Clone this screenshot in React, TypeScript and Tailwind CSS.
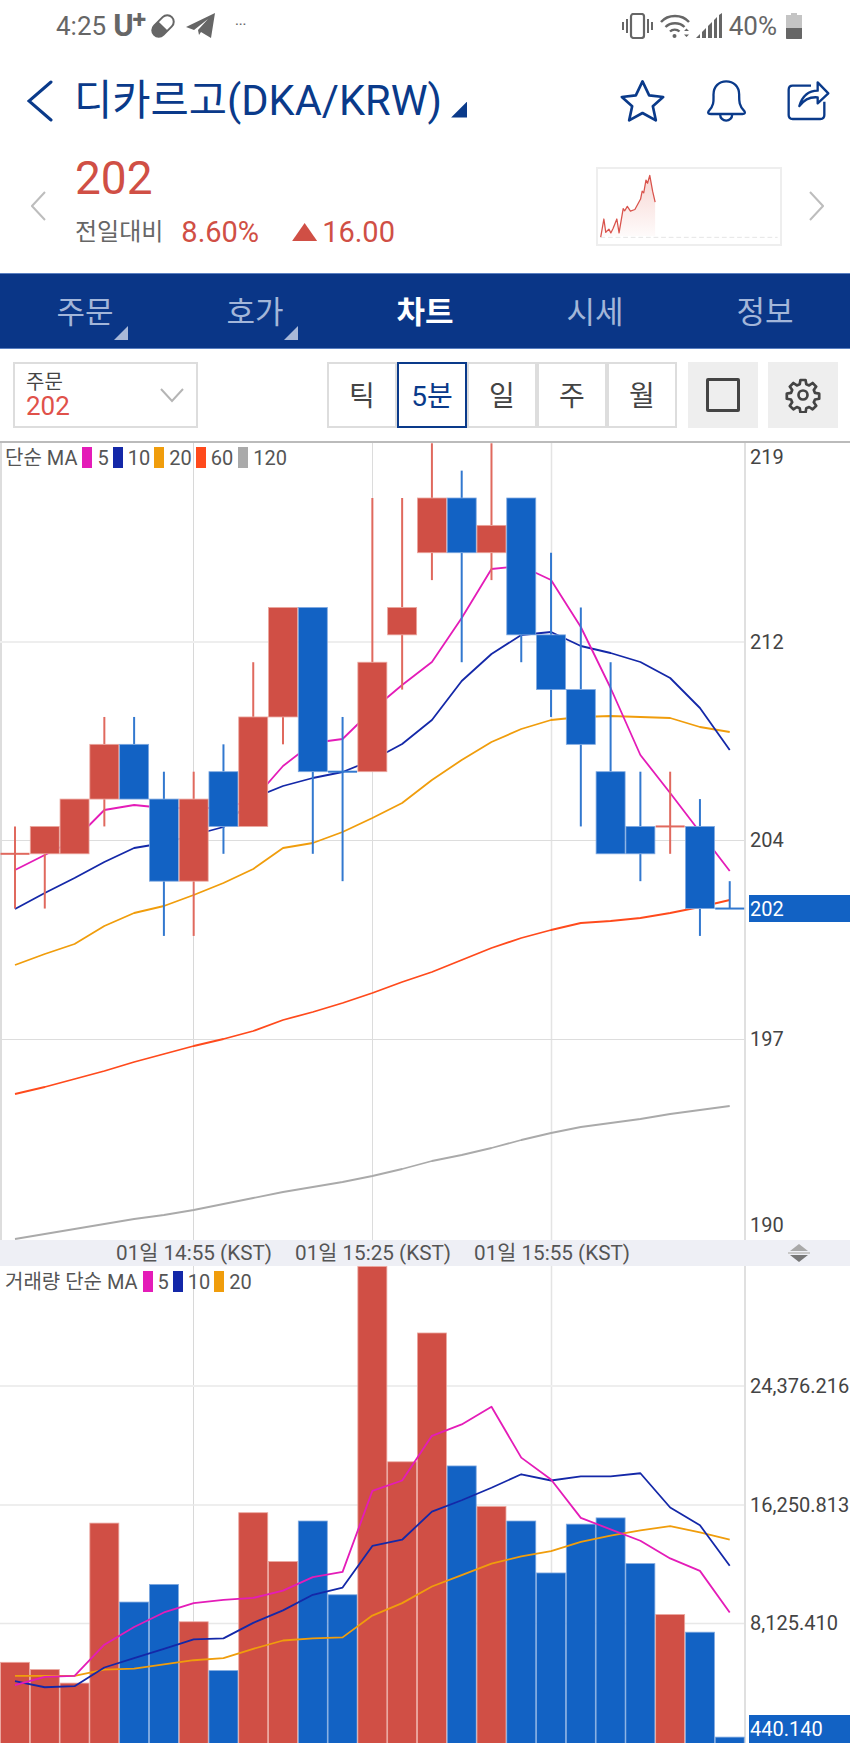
import React from 'react';

const RED = '#d04f45';
const BLUE = '#1262c4';
const NAVY = '#0a3a8a';

const X = (i: number) => 15 + 29.78 * i;
const L = (n: number) => 498 + 27.37 * n;
const pts = (ys: number[]) => ys.map((y, i) => `${X(i)},${y}`).join(' ');
// volume readings were taken off a squeezed crop
const V = (y: number) => 1200 + (y - 1200) * 1.0389;

// color, body top, body bottom, wick top, wick bottom (in price ticks)
const candles: [string, number, number, number | null, number | null][] = [
  ['r', 13, 13, 12, 15],
  ['r', 12, 13, null, 15],
  ['r', 11, 13, null, null],
  ['r', 9, 11, 8, 12],
  ['b', 9, 11, 8, null],
  ['b', 11, 14, 10, 16],
  ['r', 11, 14, 10, 16],
  ['b', 10, 12, 9, 13],
  ['r', 8, 12, 6, null],
  ['r', 4, 8, null, 9],
  ['b', 4, 10, null, 13],
  ['b', 10, 10, 8, 14],
  ['r', 6, 10, 0, null],
  ['r', 4, 5, 0, 7],
  ['r', 0, 2, -2, 3],
  ['b', 0, 2, -1, 6],
  ['r', 1, 2, -2, 3],
  ['b', 0, 5, null, 6],
  ['b', 5, 7, 2, 8],
  ['b', 7, 9, 4, 12],
  ['b', 10, 13, 6, null],
  ['b', 12, 13, 10, 14],
  ['r', 12, 12, 10, 13],
  ['b', 12, 15, 11, 16],
  ['b', 15, 15, 14, null],
];

const ma5 = [870, 855, 840, 810, 805, 808, 808, 808, 800, 766, 743, 739, 710, 685, 662, 618, 569, 566, 580, 627, 688, 755, 793, 832, 871];
const ma10 = [909, 893, 878, 862, 848, 843, 835, 827, 798, 786, 778, 772, 760, 744, 720, 681, 654, 635, 632, 646, 653, 662, 678, 708, 750];
const ma20 = [965, 954, 944, 926, 913, 906, 895, 883, 869, 848, 843, 832, 818, 803, 780, 760, 742, 729, 720, 717, 716, 717, 718, 727, 732];
const ma60 = [1094, 1087, 1079, 1071, 1062, 1054, 1046, 1039, 1031, 1020, 1012, 1003, 993, 982, 972, 960, 948, 938, 930, 923, 921, 918, 913, 907, 900];
const ma120 = [1239, 1234, 1229, 1224, 1219, 1215, 1210, 1204, 1198, 1192, 1187, 1182, 1176, 1169, 1161, 1155, 1148, 1140, 1133, 1127, 1123, 1119, 1114, 1110, 1106];

const volumes: [string, number][] = [
  ['r', 1645], ['r', 1652], ['r', 1665], ['r', 1511], ['b', 1587], ['b', 1570], ['r', 1606], ['b', 1653], ['r', 1501],
  ['r', 1548], ['b', 1509], ['b', 1580], ['r', 1264], ['r', 1452], ['r', 1328], ['b', 1456], ['r', 1495], ['b', 1509],
  ['b', 1559], ['b', 1512], ['b', 1506], ['b', 1550], ['r', 1599], ['b', 1616], ['b', 1717],
];

const vma5 = [1667, 1659, 1658, 1628, 1611, 1597, 1588, 1585, 1583, 1576, 1563, 1558, 1480, 1470, 1427, 1416, 1399, 1448, 1469, 1506, 1517, 1528, 1545, 1557, 1597].map(V);
const vma10 = [1663, 1669, 1668, 1650, 1641, 1632, 1623, 1622, 1607, 1595, 1580, 1573, 1533, 1527, 1500, 1489, 1477, 1464, 1470, 1466, 1466, 1463, 1496, 1513, 1552].map(V);
const vma20 = [1658, 1658, 1658, 1652, 1651, 1647, 1643, 1641, 1632, 1624, 1622, 1621, 1600, 1588, 1572, 1561, 1550, 1543, 1538, 1529, 1523, 1518, 1514, 1520, 1527].map(V);

const spark = '514,715 524,658 530,700 540,690 546,702 553,688 565,658 572,702 585,625 590,632 598,618 608,633 622,628 640,595 645,570 650,575 657,535 662,545 669,520 678,570 686,605';

function Line({ ys, color }: { ys: number[]; color: string }) {
  return <polyline points={pts(ys)} fill="none" stroke={color} strokeWidth="1.8" strokeLinejoin="round" />;
}

function AxisLabel({ y, children, fill = '#444' }: { y: number; children: React.ReactNode; fill?: string }) {
  return (
    <text x="750" y={y + 7} fontSize="20" fill={fill}>
      {children}
    </text>
  );
}

function Swatch({ color, gap = 'ml-[4px]' }: { color: string; gap?: string }) {
  return <span className={`${gap} mr-[5px] inline-block h-[21px] w-[10px] ${color}`} />;
}

function PriceChart() {
  return (
    <svg viewBox="0 443 850 797" className="block h-[797px] w-[850px]">
      <line x1="1" y1="443" x2="1" y2="1240" stroke="#ddd" strokeWidth="2" />
      <line x1="193.5" y1="443" x2="193.5" y2="1240" stroke="#d8d8d8" />
      <line x1="372.5" y1="443" x2="372.5" y2="1240" stroke="#dcdcdc" />
      <line x1="551.5" y1="443" x2="551.5" y2="1240" stroke="#e4e4e4" strokeWidth="1.5" />
      <line x1="0" y1="642" x2="745" y2="642" stroke="#eeeeee" strokeWidth="2" />
      <line x1="0" y1="840.5" x2="745" y2="840.5" stroke="#dddddd" />
      <line x1="0" y1="1039.5" x2="745" y2="1039.5" stroke="#dddddd" />
      <line x1="745" y1="443" x2="745" y2="1240" stroke="#e0e0e0" strokeWidth="2" />

      <Line ys={ma120} color="#aaaaaa" />
      <Line ys={ma60} color="#ff4a1c" />
      <Line ys={ma20} color="#f09d0c" />
      <Line ys={ma10} color="#1428a8" />
      <Line ys={ma5} color="#e41cb8" />

      {candles.map(([c, top, bottom, wt, wb], i) => {
        const cx = X(i);
        const fill = c === 'r' ? RED : BLUE;
        const edge = c === 'r' ? '#eba79f' : '#7fa9e0';
        const wick = c === 'r' ? '#e0695e' : '#3278cf';
        return (
          <g key={i}>
            {wt !== null && <line x1={cx} y1={L(wt)} x2={cx} y2={L(top)} stroke={wick} strokeWidth="2" />}
            {wb !== null && <line x1={cx} y1={L(bottom)} x2={cx} y2={L(wb)} stroke={wick} strokeWidth="2" />}
            {top === bottom ? (
              <line x1={cx - 14.5} y1={L(top)} x2={cx + 14.5} y2={L(top)} stroke={wick} strokeWidth="2" />
            ) : (
              <rect x={cx - 14.5} y={L(top)} width="29" height={L(bottom) - L(top)} fill={fill} stroke={edge} strokeWidth="0.8" />
            )}
          </g>
        );
      })}

      <AxisLabel y={457}>219</AxisLabel>
      <AxisLabel y={642}>212</AxisLabel>
      <AxisLabel y={840}>204</AxisLabel>
      <rect x="749" y="895" width="101" height="27" fill={BLUE} />
      <AxisLabel y={909} fill="#ffffff">202</AxisLabel>
      <AxisLabel y={1039}>197</AxisLabel>
      <AxisLabel y={1225}>190</AxisLabel>
    </svg>
  );
}

function VolumeChart() {
  return (
    <svg viewBox="0 1266 850 477" className="block h-[477px] w-[850px]">
      <line x1="193.5" y1="1266" x2="193.5" y2="1743" stroke="#d8d8d8" />
      <line x1="372.5" y1="1266" x2="372.5" y2="1743" stroke="#dcdcdc" />
      <line x1="551.5" y1="1266" x2="551.5" y2="1743" stroke="#e4e4e4" strokeWidth="1.5" />
      <line x1="0" y1="1386" x2="745" y2="1386" stroke="#eeeeee" strokeWidth="2" />
      <line x1="0" y1="1505" x2="745" y2="1505" stroke="#e8e8e8" strokeWidth="1.5" />
      <line x1="0" y1="1623.5" x2="745" y2="1623.5" stroke="#e8e8e8" strokeWidth="1.5" />
      <line x1="745" y1="1266" x2="745" y2="1743" stroke="#e0e0e0" strokeWidth="2" />

      {volumes.map(([c, top], i) => (
        <rect
          key={i}
          x={X(i) - 14.5}
          y={V(top)}
          width="29"
          height={1760 - V(top)}
          fill={c === 'r' ? RED : BLUE}
          stroke={c === 'r' ? '#eba79f' : '#7fa9e0'}
          strokeWidth="0.8"
        />
      ))}

      <Line ys={vma20} color="#f09d0c" />
      <Line ys={vma10} color="#1428a8" />
      <Line ys={vma5} color="#e41cb8" />

      <AxisLabel y={1386}>24,376.216</AxisLabel>
      <AxisLabel y={1505}>16,250.813</AxisLabel>
      <AxisLabel y={1623}>8,125.410</AxisLabel>
      <rect x="749" y="1715" width="101" height="28" fill={BLUE} />
      <AxisLabel y={1729} fill="#ffffff">440.140</AxisLabel>
    </svg>
  );
}

function StatusBar() {
  return (
    <div className="flex h-[50px] items-center justify-between pl-[56px] pr-[48px] pt-[1px] text-[#666]">
      <div className="flex items-center">
        <span className="text-[26px] leading-none">4:25</span>
        <span className="ml-[7px] text-[31px] font-bold leading-none">U</span>
        <span className="mb-[12px] -ml-[1px] text-[25px] font-bold leading-none">+</span>
        <svg viewBox="0 0 26 26" className="ml-[4px] h-[26px] w-[26px]">
          <g transform="rotate(-45 13 13)">
            <rect x="0.5" y="6.5" width="25" height="13" rx="6.5" fill="#fff" stroke="#666" strokeWidth="2" />
            <path d="M13 6.5H7a6.5 6.500 0 0 0 0 13h6z" fill="#666" />
          </g>
        </svg>
        <svg viewBox="0 0 29 25" className="ml-[10px] h-[25px] w-[29px]">
          <path d="M0 14 29 0 25 25 15 19 13 22 12 17 22 6 8 17z" fill="#666" />
        </svg>
        <span className="ml-[20px] mb-[2px] text-[11px] font-bold leading-none tracking-[0.5px]">···</span>
      </div>
      <div className="flex items-center">
        <svg viewBox="0 0 31 26" className="h-[26px] w-[31px]" fill="none" stroke="#666" strokeWidth="2">
          <rect x="9" y="1" width="13" height="24" rx="2.5" strokeWidth="2.2" />
          <path d="M5 6v14M1 9v8M26 6v14M30 9v8" />
        </svg>
        <svg viewBox="0 0 30 26" className="ml-[7px] h-[26px] w-[30px]" fill="none" stroke="#666" strokeWidth="2.4">
          <path d="M1 9c7-8 21-8 28 0M5.500 14c5-5 14-5 19 0M10 18.500c2.500-2.500 7-2.500 9.500 0" />
          <circle cx="14.500" cy="23" r="2" fill="#666" stroke="none" />
          <path d="M24 18l2.500-2.500 2.500 2.500zM24 21.500l2.500 2.500 2.500-2.500z" fill="#666" stroke="none" />
        </svg>
        <svg viewBox="0 0 26 26" className="ml-[6px] h-[26px] w-[26px]" fill="#666">
          <path d="M0 25 4 21v4zM6 19l4-4v10H6zM12 13l4-4v16h-4zM18 7l3-3v21h-3zM23 2l3-2v25h-3z" />
        </svg>
        <span className="ml-[7px] text-[26px] leading-none">40%</span>
        <svg viewBox="0 0 16 26" className="ml-[9px] h-[26px] w-[16px]">
          <path d="M5 0h6v2h5v24H0V2h5z" fill="#c4c4c4" />
          <path d="M0 15h16v10a1 1 0 0 1-1 1H1a1 1 0 0 1-1-1z" fill="#666" />
        </svg>
      </div>
    </div>
  );
}

function Header() {
  return (
    <div className="flex h-[102px] items-center text-[#0a3a8a]">
      <svg viewBox="0 0 26 42" className="ml-[27px] h-[42px] w-[26px]" fill="none" stroke={NAVY} strokeWidth="3" strokeLinecap="round">
        <path d="M24 2 2 21l22 19" />
      </svg>
      <span className="ml-[21px] text-[41.6px] leading-none whitespace-nowrap">디카르고(DKA/KRW)</span>
      <span className="ml-[9px] mt-[17px] h-[16px] w-[16px] bg-[#0a3a8a] [clip-path:polygon(100%_0,100%_100%,0_100%)]" />
      <div className="ml-auto mr-[19px] flex items-center">
        <svg viewBox="585 238 140 132" className="h-[44px] w-[47px]" fill="none" stroke={NAVY} strokeWidth="8" strokeLinejoin="round">
          <path d="M655 245 675 287 717 292 686 320 695 362 655 340 615 362 624 320 593 292 635 287z" />
        </svg>
        <svg viewBox="840 238 128 132" className="ml-[39px] h-[44px] w-[43px]" fill="none" stroke={NAVY} strokeWidth="7" strokeLinejoin="round">
          <path d="M850 335C868 318 865 300 865 285 865 260 882 245 903 245 925 245 942 260 942 285 942 300 940 318 958 335Q962 343 952 343H858Q846 343 850 335Z" />
          <path d="M885 345A18 18 0 0 0 921 345" />
        </svg>
        <svg viewBox="1085 238 135 130" className="ml-[38px] h-[44px] w-[45px]" fill="none" stroke={NAVY} strokeWidth="7" strokeLinejoin="round">
          <path d="M1160 257H1105Q1093 257 1093 269V345Q1093 357 1105 357H1188Q1200 357 1200 345V305" />
          <path d="M1125 318C1135 285 1155 272 1180 272V247L1212 280 1180 310V292C1160 290 1140 298 1125 318Z" />
        </svg>
      </div>
    </div>
  );
}

function Quote() {
  return (
    <div className="mb-[13px] flex h-[108px] items-center">
      <svg viewBox="0 0 15 30" className="ml-[31px] h-[30px] w-[15px]" fill="none" stroke="#bdbdbd" strokeWidth="2">
        <path d="M14 1 1 15l13 14" />
      </svg>
      <div className="-mt-[11px] ml-[29px] flex flex-col">
        <div className="text-[46px] leading-[54px] text-[#d04f45]">202</div>
        <div className="mt-[9px] flex items-center leading-[36px]">
          <span className="text-[24px] text-[#666]">전일대비</span>
          <span className="ml-[18px] text-[29px] text-[#d04f45]">8.60%</span>
          <span className="ml-[33px] h-[18px] w-[25px] bg-[#d04f45] [clip-path:polygon(50%_0,100%_100%,0_100%)]" />
          <span className="ml-[5px] text-[29px] text-[#d04f45]">16.00</span>
        </div>
      </div>
      <svg viewBox="513 500 560 237" className="ml-auto h-[79px] w-[186px] border-2 border-[#eeeeee]">
        <defs>
          <linearGradient id="sparkFill" x1="0" y1="0" x2="0" y2="1">
            <stop offset="0" stopColor="#e8897f" stopOpacity="0.35" />
            <stop offset="1" stopColor="#e8897f" stopOpacity="0.03" />
          </linearGradient>
        </defs>
        <polygon points={`${spark} 686,712 514,712`} fill="url(#sparkFill)" />
        <line x1="513" y1="716" x2="1073" y2="716" stroke="#e4e4e4" strokeWidth="3" strokeDasharray="15 9" />
        <polyline points={spark} fill="none" stroke="#d9534c" strokeWidth="4" strokeLinejoin="round" />
      </svg>
      <svg viewBox="0 0 15 30" className="ml-[27px] mr-[26px] h-[30px] w-[15px]" fill="none" stroke="#bdbdbd" strokeWidth="2">
        <path d="M1 1l13 14L1 29" />
      </svg>
    </div>
  );
}

function TabCell({ label, caret, active }: { label: string; caret?: boolean; active?: boolean }) {
  return (
    <div className="relative flex items-center justify-center pt-[5px]">
      <span className={active ? 'text-[31px] font-bold text-white' : 'text-[31px] text-[#a3b6d9]'}>{label}</span>
      {caret && (
        <span className="absolute left-[114px] top-[52px] h-[14px] w-[14px] bg-[#a8b8d8] [clip-path:polygon(100%_0,100%_100%,0_100%)]" />
      )}
    </div>
  );
}

function Tabs() {
  return (
    <div className="grid h-[76px] grid-cols-5 border-y border-[#5a7fc0] bg-[#0a3687]">
      <TabCell label="주문" caret />
      <TabCell label="호가" caret />
      <TabCell label="차트" active />
      <TabCell label="시세" />
      <TabCell label="정보" />
    </div>
  );
}

function Segment({ label, active }: { label: string; active?: boolean }) {
  return (
    <div
      className={
        active
          ? 'flex w-[70px] items-center justify-center border-2 border-[#0a3a8a] pt-[3px] text-[#0a3a8a]'
          : 'flex w-[70px] items-center justify-center border-2 border-[#dddddd] pt-[3px] text-[#444]'
      }
    >
      {label}
    </div>
  );
}

function Toolbar() {
  return (
    <div className="flex h-[92px] items-center pl-[13px]">
      <div className="flex h-[66px] w-[185px] items-center justify-between border-2 border-[#dddddd] pl-[11px] pr-[12px]">
        <div className="flex flex-col">
          <span className="text-[20px] leading-[22px] text-[#444]">주문</span>
          <span className="text-[26px] leading-[26px] text-[#e0514a]">202</span>
        </div>
        <svg viewBox="0 0 24 15" className="h-[15px] w-[24px]" fill="none" stroke="#b5b5b5" strokeWidth="2">
          <path d="M1 1l11 12L23 1" />
        </svg>
      </div>
      <div className="ml-[129px] flex h-[66px] text-[28px]">
        <Segment label="틱" />
        <Segment label="5분" active />
        <Segment label="일" />
        <Segment label="주" />
        <Segment label="월" />
      </div>
      <div className="ml-[11px] flex h-[66px] w-[70px] items-center justify-center bg-[#eeeeee]">
        <div className="h-[34px] w-[34px] rounded-[2px] border-[3px] border-[#444]" />
      </div>
      <div className="ml-[10px] flex h-[66px] w-[70px] items-center justify-center bg-[#eeeeee]">
        <svg viewBox="0 0 24 24" className="h-[36px] w-[36px]" fill="none" stroke="#444" strokeWidth="1.800" strokeLinejoin="round">
          <path d="M10.300 2h3.400l.5 2.800 1.900.8 2.300-1.600 2.400 2.400-1.600 2.300.8 1.900 2.800.5v3.400l-2.800.5-.8 1.900 1.600 2.300-2.400 2.400-2.300-1.600-1.900.8-.5 2.800h-3.400l-.5-2.800-1.900-.8-2.300 1.600-2.400-2.400 1.600-2.300-.8-1.900-2.800-.5v-3.400l2.800-.5.8-1.900-1.600-2.300 2.400-2.400 2.300 1.600 1.900-.8z" />
          <circle cx="12" cy="12" r="3" />
        </svg>
      </div>
    </div>
  );
}

function AxisStrip() {
  return (
    <div className="grid h-[26px] grid-cols-[745px_105px] bg-[#eeeff5] text-[20.7px] leading-[26px] text-[#555]">
      <div className="flex pl-[116px]">
        <span className="w-[179px] whitespace-nowrap">01일 14:55 (KST)</span>
        <span className="w-[179px] whitespace-nowrap">01일 15:25 (KST)</span>
        <span className="whitespace-nowrap">01일 15:55 (KST)</span>
      </div>
      <div className="flex items-center pl-[43px]">
        <svg viewBox="0 0 22 18" className="h-[18px] w-[22px]">
          <path d="M11 0 20 7H2z" fill="#a9a9a9" />
          <rect x="0" y="8" width="22" height="2" fill="#c9c9c9" />
          <path d="M2 11h18l-9 7z" fill="#777" />
        </svg>
      </div>
    </div>
  );
}

export default function App() {
  return (
    <div className="h-[1743px] w-[850px] overflow-hidden bg-white font-['Roboto','Noto_Sans_CJK_KR',sans-serif]">
      <StatusBar />
      <Header />
      <Quote />
      <Tabs />
      <Toolbar />
      <div className="relative border-t-2 border-[#bbbbbb]">
        <div className="absolute left-[5px] top-[4px] flex h-[21px] items-center text-[20px] text-[#555]">
          <span>단순 MA</span>
          <Swatch color="bg-[#e41cb8]" gap="ml-[5px]" />
          <span>5</span>
          <Swatch color="bg-[#1428a8]" />
          <span>10</span>
          <Swatch color="bg-[#f09d0c]" />
          <span>20</span>
          <Swatch color="bg-[#ff4a1c]" />
          <span>60</span>
          <Swatch color="bg-[#aaaaaa]" gap="ml-[5px]" />
          <span>120</span>
        </div>
        <PriceChart />
      </div>
      <AxisStrip />
      <div className="relative">
        <VolumeChart />
        <div className="absolute left-[5px] top-[5px] flex h-[21px] items-center text-[20px] text-[#555]">
          <span>거래량 단순 MA</span>
          <Swatch color="bg-[#e41cb8]" gap="ml-[5px]" />
          <span>5</span>
          <Swatch color="bg-[#1428a8]" />
          <span>10</span>
          <Swatch color="bg-[#f09d0c]" />
          <span>20</span>
        </div>
      </div>
    </div>
  );
}
